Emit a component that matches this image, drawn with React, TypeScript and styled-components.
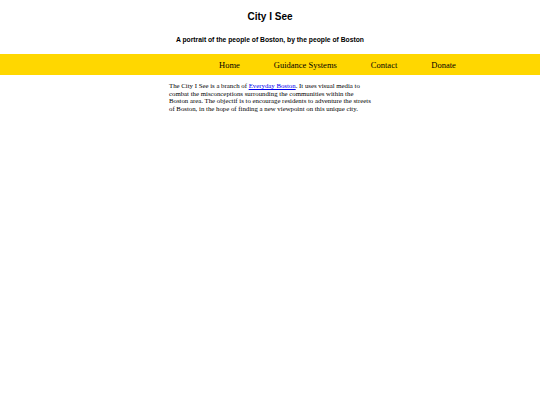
import React from "react";
import styled, { createGlobalStyle } from "styled-components";

const Global = createGlobalStyle`
  html, body { margin: 0; padding: 0; background: #ffffff; }
  body { font-family: "Liberation Serif", "Times New Roman", serif; color: #000; }
`;

const Page = styled.div`
  display: flex;
  flex-direction: column;
  align-items: stretch;
`;

const Header = styled.header`
  display: flex;
  flex-direction: column;
  align-items: center;
  padding-top: 11px;
`;

const Title = styled.h1`
  margin: 0;
  font-family: "Liberation Sans", Arial, sans-serif;
  font-weight: bold;
  font-size: 10px;
  line-height: 12px;
`;

const Subtitle = styled.h2`
  margin: 13px 0 0 0;
  font-family: "Liberation Sans", Arial, sans-serif;
  font-weight: bold;
  font-size: 6.75px;
  line-height: 8px;
`;

const NavBar = styled.nav`
  margin-top: 10px;
  height: 21px;
  background: #ffd700;
  display: flex;
  align-items: center;
  padding-left: 202px;
`;

const NavItem = styled.a`
  font-family: "Liberation Serif", "Times New Roman", serif;
  font-size: 8.5px;
  color: #000;
  text-decoration: none;
  padding: 0 17px;
`;

const Content = styled.main`
  display: flex;
  justify-content: flex-start;
  padding: 7px 0 0 169px;
`;

const Paragraph = styled.p`
  margin: 0;
  width: 205px;
  font-size: 6.8px;
  line-height: 7.7px;
`;

const Link = styled.a`
  color: #0000ee;
  text-decoration: underline;
`;

export default function App() {
  return (
    <Page>
      <Global />
      <Header>
        <Title>City I See</Title>
        <Subtitle>A portrait of the people of Boston, by the people of Boston</Subtitle>
      </Header>
      <NavBar>
        <NavItem href="#">Home</NavItem>
        <NavItem href="#">Guidance Systems</NavItem>
        <NavItem href="#">Contact</NavItem>
        <NavItem href="#">Donate</NavItem>
      </NavBar>
      <Content>
        <Paragraph>
          The City I See is a branch of <Link href="#">Everyday Boston</Link>. It uses visual media to
          combat the misconceptions surrounding the communities within the Boston area. The objectif is
          to encourage residents to adventure the streets of Boston, in the hope of finding a new
          viewpoint on this unique city.
        </Paragraph>
      </Content>
    </Page>
  );
}
